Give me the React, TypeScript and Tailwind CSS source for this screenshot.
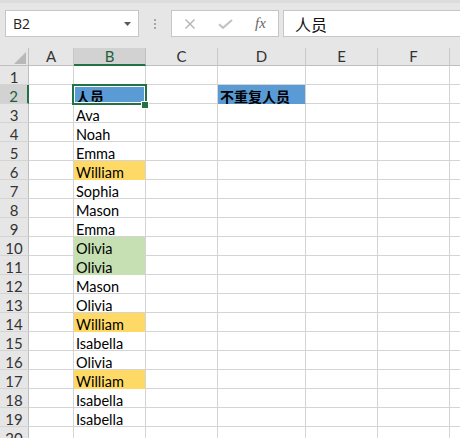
import React from "react";

type Cell = { text?: string; fill?: string; bold?: boolean };

const cols = ["A", "B", "C", "D", "E", "F", "G"];
// widths include the 1px right grid line
const widths = ["w-[45px]", "w-[72px]", "w-[72px]", "w-[88px]", "w-[72px]", "w-[72px]", "w-[72px]"];

const YELLOW = "bg-[#ffd966]";
const GREEN = "bg-[#c6e0b4]";
const BLUE = "bg-[#5b9bd5]";

const colB: Cell[] = [
  {},
  { text: "人员", fill: BLUE, bold: true },
  { text: "Ava" },
  { text: "Noah" },
  { text: "Emma" },
  { text: "William", fill: YELLOW },
  { text: "Sophia" },
  { text: "Mason" },
  { text: "Emma" },
  { text: "Olivia", fill: GREEN },
  { text: "Olivia", fill: GREEN },
  { text: "Mason" },
  { text: "Olivia" },
  { text: "William", fill: YELLOW },
  { text: "Isabella" },
  { text: "Olivia" },
  { text: "William", fill: YELLOW },
  { text: "Isabella" },
  { text: "Isabella" },
  {},
  {},
];

function getCell(row: number, col: number): Cell {
  if (col === 1) return colB[row - 1] ?? {};
  if (col === 3 && row === 2) return { text: "不重复人员", fill: BLUE, bold: true };
  return {};
}

function FormulaBar() {
  return (
    <div className="relative h-[48px] bg-[#e6e6e6] flex items-start pt-[10px] pl-[5px]">
      <div className="absolute top-0 left-0 right-0 h-[3px] bg-[#dcdcdc]" />
      {/* name box */}
      <div className="w-[134px] shrink-0 h-[27px] bg-white border border-[#c6c6c6] flex items-center pl-[7px] pr-[7px]">
        <span className="flex-1 text-[14px] text-[#222] font-['Open_Sans',sans-serif]">B2</span>
        <svg width="7" height="4" viewBox="0 0 7 4">
          <path d="M0 0h7L3.5 4z" fill="#595959" />
        </svg>
      </div>
      {/* grip dots */}
      <div className="w-[32px] shrink-0 h-[27px] flex flex-col items-center justify-center gap-[2px]">
        <div className="w-[2px] h-[2px] bg-[#a6a6a6]" />
        <div className="w-[2px] h-[2px] bg-[#a6a6a6]" />
        <div className="w-[2px] h-[2px] bg-[#a6a6a6]" />
      </div>
      {/* cancel / enter / fx */}
      <div className="w-[108px] shrink-0 h-[27px] bg-white border border-[#c6c6c6] flex items-center">
        <svg width="12" height="10" viewBox="0 0 12 10" className="ml-[12px]">
          <path d="M1.5 0.5l9 9M10.5 0.5l-9 9" stroke="#b3b3b3" strokeWidth="1.4" />
        </svg>
        <svg width="15" height="10" viewBox="0 0 15 10" className="ml-[22px]">
          <path d="M1 5.2l4 3.6L14 1" stroke="#c3c3c3" strokeWidth="2.2" fill="none" />
        </svg>
        <span className="ml-[22px] text-[15px] italic text-[#666] font-['Liberation_Serif',serif] leading-none">
          fx
        </span>
      </div>
      {/* formula input */}
      <div className="ml-[4px] w-[200px] shrink-0 h-[27px] bg-white border border-[#c6c6c6] flex items-center pl-[11px]">
        <span className="text-[16px] text-[#111] font-['Noto_Sans_CJK_SC',sans-serif]">人员</span>
      </div>
    </div>
  );
}

function HeaderRow() {
  return (
    <div className="flex h-[18px]">
      <div className="relative w-[29px] shrink-0 bg-[#e6e6e6] border-r border-b border-[#bfbfbf]">
        <svg width="12" height="12" viewBox="0 0 12 12" className="absolute left-[14px] top-[4px]">
          <path d="M12 0V12H0z" fill="#b8b8b8" />
        </svg>
      </div>
      {cols.map((c, i) => {
        const active = i === 1;
        return (
          <div
            key={c}
            className={`${widths[i]} shrink-0 flex items-center justify-center text-[15px] leading-none border-r ${
              active
                ? "bg-[#d2d2d2] border-[#bfbfbf] border-b-2 border-b-[#217346] text-[#1f5f3b]"
                : "bg-[#e6e6e6] border-[#c8c8c8] border-b border-b-[#bfbfbf] text-[#333]"
            }`}
          >
            {c}
          </div>
        );
      })}
    </div>
  );
}

function DataRow({ row }: { row: number }) {
  const active = row === 2;
  return (
    <div className="flex h-[19px]">
      <div
        className={`w-[29px] shrink-0 flex items-center justify-center text-[15px] leading-none border-b border-b-[#d4d4d4] ${
          active
            ? "bg-[#d2d2d2] border-r-2 border-r-[#217346] text-[#1f5f3b]"
            : "bg-[#e6e6e6] border-r border-r-[#bfbfbf] text-[#333]"
        }`}
      >
        <span className="relative top-[2px]">{row}</span>
      </div>
      {cols.map((c, i) => {
        const cell = getCell(row, i);
        return (
          <div
            key={c}
            className={`${widths[i]} shrink-0 border-r border-b border-[#d4d4d4] pl-[2px] overflow-visible whitespace-nowrap leading-[19px] text-black ${
              cell.fill ? `${cell.fill} border-b-transparent` : ""
            } ${cell.bold ? "font-bold font-['Noto_Sans_CJK_SC',sans-serif] text-[14px]" : "text-[14.5px]"}`}
          >
            {cell.text && <span className="relative top-[2px]">{cell.text}</span>}
          </div>
        );
      })}
    </div>
  );
}

export default function App() {
  const rows = Array.from({ length: 21 }, (_, i) => i + 1);
  return (
    <div className="w-[460px] h-[438px] overflow-hidden bg-white font-['Lato','Noto_Sans_CJK_SC',sans-serif]">
      <FormulaBar />
      <div className="relative">
        <HeaderRow />
        {rows.map((r) => (
          <DataRow key={r} row={r} />
        ))}
        {/* active cell B2 */}
        <div className="absolute left-[72px] top-[36px] w-[75px] h-[21px] border-2 border-[#217346]">
          <div className="absolute inset-0 border border-white" />
        </div>
        <div className="absolute left-[141px] top-[53px] w-[8px] h-[8px] bg-[#217346] border border-white" />
      </div>
    </div>
  );
}
